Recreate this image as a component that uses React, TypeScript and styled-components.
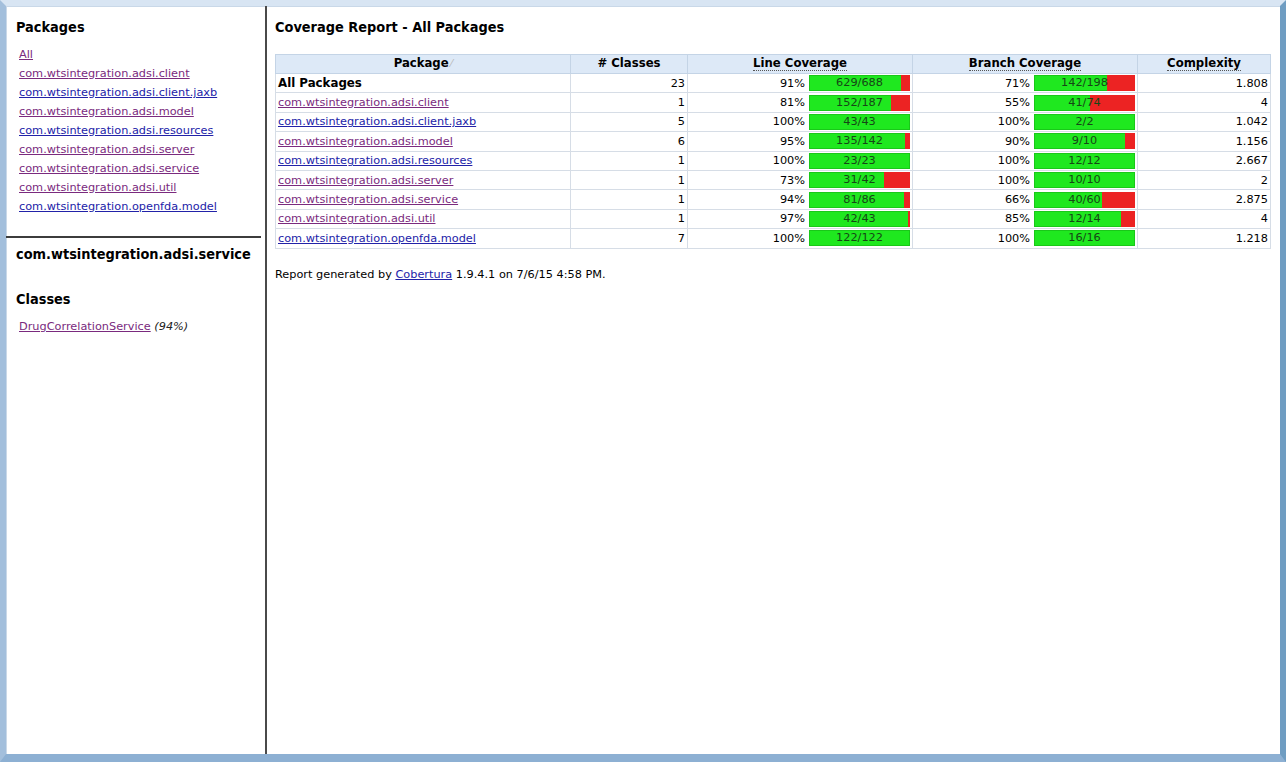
import React from "react";
import styled, { createGlobalStyle } from "styled-components";

const Global = createGlobalStyle`
  html, body { margin: 0; padding: 0; background: #ffffff; }
  body { font-family: "DejaVu Sans", sans-serif; font-size: 11.3px; color: #000; }
`;

const Frame = styled.div`
  box-sizing: border-box;
  width: 1286px;
  height: 762px;
  border-top: 6px solid #d8e5f3;
  border-left: 6px solid #a3bfdc;
  border-right: 6px solid #6f9dc2;
  border-bottom: 8px solid #8db0d3;
  box-shadow: inset 1px 1px 0 #c9d8e8, 0 -1px 0 #b9cde3;
  display: grid;
  grid-template-columns: 259px 2px 1fr;
  background: #fff;
`;

const LeftPane = styled.div`
  display: flex;
  flex-direction: column;
  padding-right: 4px;
`;

const Divider = styled.div`
  background: #4a4a4a;
`;

const HRule = styled.div`
  height: 2px;
  background: #3c3c3c;
`;

const Section = styled.div<{ $h?: number; $top?: number }>`
  padding: ${(p) => p.$top ?? 12}px 0 0 10px;
  height: ${(p) => (p.$h ? `${p.$h}px` : "auto")};
  box-sizing: border-box;
`;

const Heading = styled.h2<{ $mt?: number }>`
  margin: ${(p) => p.$mt ?? 0}px 0 0 0;
  font-family: "DejaVu Sans Condensed", "DejaVu Sans", sans-serif;
  font-weight: bold;
  font-size: 14.4px;
  line-height: 18px;
`;

const LinkList = styled.ul`
  list-style: none;
  margin: 9px 0 0 3px;
  padding: 0;
`;

const LinkItem = styled.li`
  line-height: 19px;
  height: 19px;
  white-space: nowrap;
`;

const Link = styled.a<{ $visited?: boolean }>`
  color: ${(p) => (p.$visited ? "#7a2a7e" : "#2222a8")};
  text-decoration: underline;
  cursor: pointer;
`;

const Pct = styled.i`
  color: #222;
`;

const Main = styled.div`
  padding: 12px 0 0 8px;
`;

const Table = styled.table`
  margin-top: 18px;
  border-collapse: collapse;
  width: 995px;
  table-layout: fixed;
`;

const Col = styled.col<{ $w: number }>`
  width: ${(p) => p.$w}px;
`;

const Th = styled.th`
  background: #dde9f7;
  border: 1px solid #c4d4e6;
  height: 18px;
  padding: 0 2px;
  font-weight: bold;
  font-size: 11.7px;
  line-height: 16px;
  text-align: center;
  white-space: nowrap;
  vertical-align: top;
`;

const Abbr = styled.span`
  border-bottom: 1px dotted #555;
`;

const SortMark = styled.span`
  color: #b8b8b8;
  font-weight: normal;
  font-size: 10px;
  margin-left: 2px;
`;

const Row = styled.tr`
  height: 19.4px;
`;

const Td = styled.td<{ $align?: string; $bold?: boolean }>`
  border: 1px solid #d6dde6;
  padding: 0 2px;
  text-align: ${(p) => p.$align || "left"};
  font-weight: ${(p) => (p.$bold ? "bold" : "normal")};
  font-size: ${(p) => (p.$bold ? "11.8px" : "11.3px")};
  white-space: nowrap;
  overflow: hidden;
`;

const CovCell = styled.div`
  display: flex;
  align-items: center;
  justify-content: flex-end;
  gap: 4px;
`;

const Bar = styled.div`
  position: relative;
  width: 101px;
  height: 16px;
  background: #1fe81f;
  box-shadow: inset 0 0 0 1px #19c819;
  display: flex;
  flex-shrink: 0;
`;

const Red = styled.div`
  background: #ec2323;
  height: 100%;
  margin-left: auto;
`;

const BarText = styled.span`
  position: absolute;
  inset: 0;
  text-align: center;
  line-height: 16px;
  color: #164616;
  font-size: 11.3px;
`;

const Footer = styled.p`
  margin: 19px 0 0 0;
`;

type Cov = { pct: number; num: number; den: number };
type Pkg = {
  name: string;
  visited: boolean;
  classes: number;
  line: Cov;
  branch: Cov;
  cx: string;
  bold?: boolean;
};

const c = (num: number, den: number): Cov => ({ pct: Math.floor((num / den) * 100), num, den });

const rows: Pkg[] = [
  { name: "All Packages", visited: false, classes: 23, line: c(629, 688), branch: c(142, 198), cx: "1.808", bold: true },
  { name: "com.wtsintegration.adsi.client", visited: true, classes: 1, line: c(152, 187), branch: c(41, 74), cx: "4" },
  { name: "com.wtsintegration.adsi.client.jaxb", visited: false, classes: 5, line: c(43, 43), branch: c(2, 2), cx: "1.042" },
  { name: "com.wtsintegration.adsi.model", visited: true, classes: 6, line: c(135, 142), branch: c(9, 10), cx: "1.156" },
  { name: "com.wtsintegration.adsi.resources", visited: false, classes: 1, line: c(23, 23), branch: c(12, 12), cx: "2.667" },
  { name: "com.wtsintegration.adsi.server", visited: true, classes: 1, line: c(31, 42), branch: c(10, 10), cx: "2" },
  { name: "com.wtsintegration.adsi.service", visited: true, classes: 1, line: c(81, 86), branch: c(40, 60), cx: "2.875" },
  { name: "com.wtsintegration.adsi.util", visited: true, classes: 1, line: c(42, 43), branch: c(12, 14), cx: "4" },
  { name: "com.wtsintegration.openfda.model", visited: false, classes: 7, line: c(122, 122), branch: c(16, 16), cx: "1.218" },
];

const navLinks: { name: string; visited: boolean }[] = [
  { name: "All", visited: true },
  ...rows.slice(1).map((r) => ({ name: r.name, visited: r.visited })),
];

function Coverage({ cov }: { cov: Cov }) {
  const red = 100 - Math.round((cov.num / cov.den) * 100);
  return (
    <CovCell>
      <span>{cov.pct}%</span>
      <Bar>
        {red > 0 && <Red style={{ width: `${red}%` }} />}
        <BarText>
          {cov.num}/{cov.den}
        </BarText>
      </Bar>
    </CovCell>
  );
}

export default function App() {
  return (
    <>
      <Global />
      <Frame>
        <LeftPane>
          <Section $h={230}>
            <Heading>Packages</Heading>
            <LinkList>
              {navLinks.map((l) => (
                <LinkItem key={l.name}>
                  <Link $visited={l.visited}>{l.name}</Link>
                </LinkItem>
              ))}
            </LinkList>
          </Section>
          <HRule />
          <Section $top={7}>
            <Heading>com.wtsintegration.adsi.service</Heading>
            <Heading $mt={27}>Classes</Heading>
            <LinkList>
              <LinkItem>
                <Link $visited>DrugCorrelationService</Link> <Pct>(94%)</Pct>
              </LinkItem>
            </LinkList>
          </Section>
        </LeftPane>
        <Divider />
        <Main>
          <Heading>Coverage Report - All Packages</Heading>
          <Table>
            <colgroup>
              <Col $w={295} />
              <Col $w={117} />
              <Col $w={225} />
              <Col $w={225} />
              <Col $w={133} />
            </colgroup>
            <thead>
              <tr>
                <Th>
                  Package<SortMark>⁄</SortMark>
                </Th>
                <Th># Classes</Th>
                <Th>
                  <Abbr>Line Coverage</Abbr>
                </Th>
                <Th>
                  <Abbr>Branch Coverage</Abbr>
                </Th>
                <Th>
                  <Abbr>Complexity</Abbr>
                </Th>
              </tr>
            </thead>
            <tbody>
              {rows.map((r) => (
                <Row key={r.name}>
                  <Td $bold={r.bold}>
                    {r.bold ? r.name : <Link $visited={r.visited}>{r.name}</Link>}
                  </Td>
                  <Td $align="right">{r.classes}</Td>
                  <Td>
                    <Coverage cov={r.line} />
                  </Td>
                  <Td>
                    <Coverage cov={r.branch} />
                  </Td>
                  <Td $align="right">{r.cx}</Td>
                </Row>
              ))}
            </tbody>
          </Table>
          <Footer>
            Report generated by <Link>Cobertura</Link> 1.9.4.1 on 7/6/15 4:58 PM.
          </Footer>
        </Main>
      </Frame>
    </>
  );
}
